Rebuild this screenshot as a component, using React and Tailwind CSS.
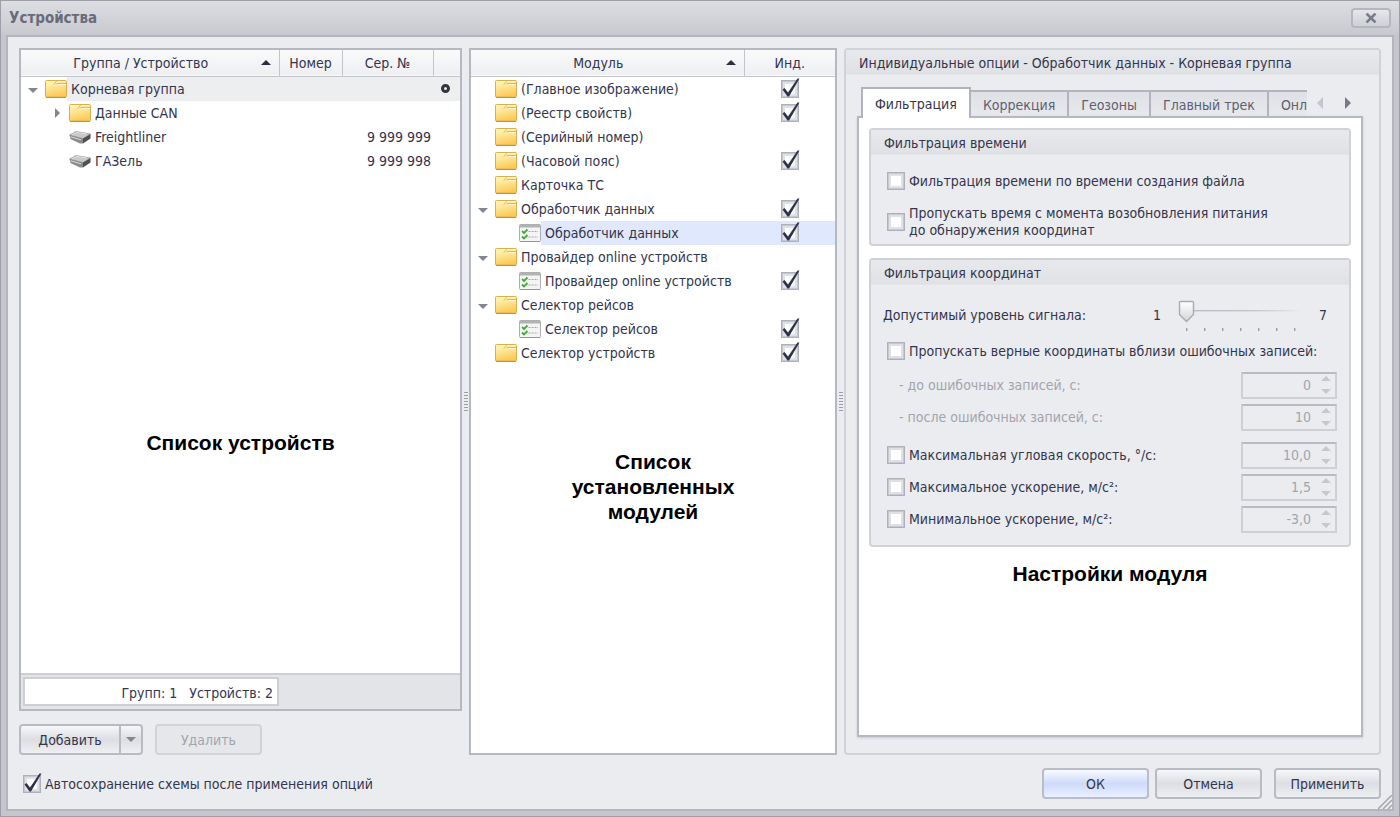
import React, { useId, useState } from 'react';

const DEVICES = [
  { name: 'Корневая группа', icon: 'folder', level: 0, arrow: 'down', focused: true, marker: true },
  { name: 'Данные CAN', icon: 'folder', level: 1, arrow: 'right' },
  { name: 'Freightliner', icon: 'device', level: 1, serial: '9 999 999' },
  { name: 'ГАЗель', icon: 'device', level: 1, serial: '9 999 998' },
];

const MODULES = [
  { name: '(Главное изображение)', icon: 'folder', level: 0, checked: true },
  { name: '(Реестр свойств)', icon: 'folder', level: 0, checked: true },
  { name: '(Серийный номер)', icon: 'folder', level: 0 },
  { name: '(Часовой пояс)', icon: 'folder', level: 0, checked: true },
  { name: 'Карточка ТС', icon: 'folder', level: 0 },
  { name: 'Обработчик данных', icon: 'folder', level: 0, arrow: 'down', checked: true },
  { name: 'Обработчик данных', icon: 'options', level: 1, checked: true, selected: true },
  { name: 'Провайдер online устройств', icon: 'folder', level: 0, arrow: 'down' },
  { name: 'Провайдер online устройств', icon: 'options', level: 1, checked: true },
  { name: 'Селектор рейсов', icon: 'folder', level: 0, arrow: 'down' },
  { name: 'Селектор рейсов', icon: 'options', level: 1, checked: true },
  { name: 'Селектор устройств', icon: 'folder', level: 0, checked: true },
];

const TABS = ['Фильтрация', 'Коррекция', 'Геозоны', 'Главный трек', 'Онл'];

function FolderIcon() {
  return (
    <svg width="22" height="20" viewBox="0 0 22 20" className="shrink-0">
      <defs>
        <linearGradient id="folderFill" x1="0" y1="0" x2="0.3" y2="1">
          <stop offset="0" stopColor="#fff8bb" />
          <stop offset="0.5" stopColor="#ffe48f" />
          <stop offset="1" stopColor="#fdc95a" />
        </linearGradient>
      </defs>
      <rect x="0.5" y="1.5" width="21" height="16.5" rx="1" fill="url(#folderFill)" stroke="#dcae4c" />
      <path d="M1.5 2.5h9.5l2.5 3h7.5" fill="none" stroke="#fffadb" />
      <path d="M11.5 2l-2.5 3.5M11.5 4.5h9.5" fill="none" stroke="#e3b655" />
      <path d="M12 2.5h8.5" stroke="#fff3c0" />
      <path d="M1 18.5h20" stroke="#c2953c" />
    </svg>
  );
}

function DeviceIcon() {
  return (
    <svg width="22" height="20" viewBox="0 0 22 20" className="shrink-0">
      <path d="M0.5 8L7 4.5l14.5 2.5L14 11.5z" fill="#c9c9c9" stroke="#a0a0a0" strokeWidth="0.8" />
      <path d="M3 7.8l5-2.2 9.5 1.4" fill="none" stroke="#e0e0e0" />
      <path d="M0.5 8L14 11.5V16.5h-3L1.5 12z" fill="#8a8a8a" />
      <path d="M14 11.5L21.5 7v4.5L14 16.5z" fill="#505050" />
      <path d="M1.5 9.8l10.5 3" stroke="#dcdcdc" />
    </svg>
  );
}

function OptionsIcon() {
  return (
    <svg width="22" height="20" viewBox="0 0 22 20" className="shrink-0">
      <rect x="0.5" y="1.5" width="21" height="17" rx="1" fill="#f4f4f4" stroke="#acacac" />
      <path d="M1 1.5h20v3H1z" fill="#b2b2b2" />
      <path d="M1 18.5h20" stroke="#969696" />
      <path d="M3 8l2 2 3.5-3.5M3 13.5l2 2 3.5-3.5" fill="none" stroke="#3fae35" strokeWidth="1.8" />
      <path d="M9.5 8.5h9.5M9.5 14h9.5" stroke="#a8a8a8" strokeDasharray="2 1" />
    </svg>
  );
}

function RowIcon({ name }) {
  if (name === 'folder') return <FolderIcon />;
  if (name === 'device') return <DeviceIcon />;
  return <OptionsIcon />;
}

function Triangle({ dir, className }) {
  const shapes = {
    up: { w: 10, h: 5, d: 'M0 5L5 0l5 5z' },
    down: { w: 10, h: 5, d: 'M0 0h10L5 5z' },
    left: { w: 6, h: 12, d: 'M6 0v12L0 6z' },
    right: { w: 6, h: 12, d: 'M0 0v12l6-6z' },
  };
  const { w, h, d } = shapes[dir];
  return (
    <svg viewBox={`0 0 ${w} ${h}`} className={`fill-current ${className}`}>
      <path d={d} />
    </svg>
  );
}

function Tick({ id, label, defaultChecked = false }) {
  return (
    <span className="relative inline-block size-[18px] shrink-0 align-middle">
      <input
        id={id}
        type="checkbox"
        aria-label={label}
        defaultChecked={defaultChecked}
        className="peer block size-[18px] appearance-none border border-[#aeb0ba] bg-white shadow-[inset_0_0_0_1px_#c6c8cf,inset_0_0_0_3px_#dfe1e6]"
      />
      <svg
        viewBox="0 0 20 20"
        className="pointer-events-none absolute -top-0.5 left-0 hidden size-5 peer-checked:block"
      >
        <path d="M1.5 11.5l2-1.5 3.5 4.5L16.5 0.5h2L8 18.5H6.5z" fill="#2f314a" />
      </svg>
    </span>
  );
}

function CheckRow({ children, defaultChecked }) {
  const id = useId();
  return (
    <div className="flex items-center gap-1">
      <Tick id={id} defaultChecked={defaultChecked} />
      <label htmlFor={id}>{children}</label>
    </div>
  );
}

function TreeCell({ row, highlight }) {
  return (
    <td className="p-0">
      <div className={`flex h-6 items-center ${row.level ? 'pl-6' : ''}`}>
        <span className="flex w-6 shrink-0 justify-center text-[#84858f]">
          {row.arrow === 'down' && <Triangle dir="down" className="mt-1 h-[5px] w-2.5" />}
          {row.arrow === 'right' && <Triangle dir="right" className="h-2.5 w-[5px]" />}
        </span>
        <RowIcon name={row.icon} />
        <span className={`h-6 flex-1 truncate pl-1 ${highlight}`}>{row.name}</span>
      </div>
    </td>
  );
}

function GroupBox({ title, children, className = '' }) {
  return (
    <section className={`min-w-0 rounded-sm border-2 border-[#d0d2d7] bg-[#ebecef] ${className}`}>
      <h2 className="h-[25px] border-b border-[#e4e5e9] bg-linear-to-b from-[#e8e9ec] to-[#dfe1e5] px-[13px] leading-[26px]">
        {title}
      </h2>
      {children}
    </section>
  );
}

function SpinBox({ id, value, label, disabled = true }) {
  return (
    <div className="flex h-[27px] w-24 items-center border-2 border-[#cfd0d6] border-t-[#b9bbc3] bg-[#ebecef] pr-1">
      <input
        id={id}
        type="text"
        aria-label={label}
        defaultValue={value}
        disabled={disabled}
        className="w-full min-w-0 flex-1 bg-transparent pr-2.5 text-right text-[#a3a4ae]"
      />
      <span className="flex flex-col gap-2 text-[#c6c8ce]">
        <Triangle dir="up" className="h-[5px] w-2.5" />
        <Triangle dir="down" className="h-[5px] w-2.5" />
      </span>
    </div>
  );
}

function LimitRow({ label, value }) {
  return (
    <div className="flex h-8 items-center justify-between">
      <CheckRow>{label}</CheckRow>
      <SpinBox label={label} value={value} />
    </div>
  );
}

function DisabledRow({ label, value }) {
  const id = useId();
  return (
    <div className="flex h-8 items-center justify-between pl-3 text-[#a3a4ae]">
      <label htmlFor={id}>{label}</label>
      <SpinBox id={id} value={value} />
    </div>
  );
}

function SignalSlider() {
  const [level, setLevel] = useState(1);
  return (
    <div className="-ml-1 flex items-center">
      <label htmlFor="signal" className="flex-1">Допустимый уровень сигнала:</label>
      <span>1</span>
      <div className="relative mr-1.5 ml-4 h-9 w-[126px]">
        <svg viewBox="0 0 126 36" className="absolute inset-0">
          <defs>
            <linearGradient id="track" x1="0" x2="1">
              <stop offset="0" stopColor="#b9bbc2" />
              <stop offset="0.6" stopColor="#c3c5cb" />
              <stop offset="1" stopColor="#b9bbc2" stopOpacity="0" />
            </linearGradient>
            <linearGradient id="thumb" x1="0" y1="0" x2="0" y2="1">
              <stop offset="0" stopColor="#ffffff" />
              <stop offset="1" stopColor="#d4d5da" />
            </linearGradient>
          </defs>
          <rect x="2" y="13" width="122" height="1.4" fill="url(#track)" />
          {[0, 1, 2, 3, 4, 5, 6].map((i) => (
            <rect key={i} x={9 + i * 18} y="31" width="1.4" height="3" fill="#9a9ca5" />
          ))}
          <path
            d="M3.5 4.5h12q1 0 1 1v12l-7 7-7-7v-12q0-1 1-1z"
            transform={`translate(${(level - 1) * 18} 0)`}
            fill="url(#thumb)"
            stroke="#a9abb3"
            strokeWidth="1.4"
          />
        </svg>
        <input
          id="signal"
          type="range"
          min="1"
          max="7"
          value={level}
          onChange={(e) => setLevel(Number(e.target.value))}
          className="absolute inset-0 w-full appearance-none bg-transparent [&::-webkit-slider-thumb]:size-4 [&::-webkit-slider-thumb]:appearance-none"
        />
      </div>
      <span className="w-7 text-center">7</span>
    </div>
  );
}

function Grip() {
  return (
    <div className="flex flex-col items-center justify-center gap-0.5">
      {[...Array(7)].map((_, i) => (
        <span key={i} className="h-px w-1 bg-[#9d9fa9]" />
      ))}
    </div>
  );
}

function PushButton({ children, primary, disabled }) {
  let look = 'border-[#b9bbc3] bg-linear-to-b from-[#f6f7f9] via-[#dcdee3] to-[#eeeff2]';
  if (primary) look = 'border-[#b9bdca] bg-linear-to-b from-[#f8faff] via-[#cfdafb] to-[#eaf0ff]';
  if (disabled) look = 'border-[#d2d3d9] bg-[#e6e7eb] text-[#a3a4ae]';
  return (
    <button type="button" disabled={disabled} className={`h-[31px] w-[107px] rounded-sm border-2 ${look}`}>
      {children}
    </button>
  );
}

const TH = 'border-r border-[#c3c5cd] p-0 font-normal last:border-r-0';
const NOTE = 'text-center font-["Liberation_Sans",sans-serif] text-[21px]/[25px] font-bold text-black';

function DevicesPanel() {
  return (
    <div className="flex flex-col gap-[13px]">
      <div className="relative flex flex-1 flex-col border-2 border-[#b6b8c1] bg-white">
        <table className="w-full table-fixed border-collapse">
          <thead>
            <tr className="h-[26px] border-b border-[#c3c5cd] bg-linear-to-b from-[#fafafb] to-[#eeeff1]">
              <th className={TH}>
                <div className="flex items-center pr-2">
                  <span className="flex-1">Группа / Устройство</span>
                  <Triangle dir="up" className="h-[5px] w-2.5 text-[#2b2d45]" />
                </div>
              </th>
              <th className={`${TH} w-[63px]`}>Номер</th>
              <th className={`${TH} w-[91px]`}>Сер. №</th>
              <th className={`${TH} w-[27px]`} />
            </tr>
          </thead>
          <tbody>
            {DEVICES.map((row) => {
              const highlight = row.focused ? 'bg-[#edeef0]' : '';
              return (
                <tr key={row.name}>
                  <TreeCell row={row} highlight={highlight} />
                  <td className={highlight} />
                  <td className={`p-0 pr-0.5 text-right ${highlight}`}>{row.serial}</td>
                  <td className={`p-0 ${highlight}`}>
                    {row.marker && (
                      <span className="ml-2 block size-[9px] rounded-full border-[3px] border-[#33343c]" />
                    )}
                  </td>
                </tr>
              );
            })}
          </tbody>
        </table>
        <div className="mt-auto flex h-9 border-t-2 border-[#cdcfd5] bg-[#e3e4e8] p-0.5">
          <div className="h-[29px] w-64 border-2 border-[#cdcfd5] bg-white pr-1 text-right leading-7">
            Групп: 1 &nbsp; Устройств: 2
          </div>
        </div>
        <p className={`${NOTE} pointer-events-none absolute inset-x-0 top-[380px]`}>Список устройств</p>
      </div>

      <div className="flex gap-3">
        <div className="flex h-[31px] rounded-sm border-2 border-[#b9bbc3] bg-linear-to-b from-[#f6f7f9] via-[#dcdee3] to-[#eeeff2]">
          <button type="button" className="w-[98px]">Добавить</button>
          <button
            type="button"
            aria-label="Варианты добавления"
            className="flex w-[22px] items-center justify-center border-l-2 border-[#b9bbc3] text-[#84858f]"
          >
            <Triangle dir="down" className="h-[5px] w-2.5" />
          </button>
        </div>
        <PushButton disabled>Удалить</PushButton>
      </div>
    </div>
  );
}

function ModulesPanel() {
  return (
    <div className="relative border-2 border-[#b6b8c1] bg-white">
      <table className="w-full table-fixed border-collapse">
        <thead>
          <tr className="h-[26px] border-b border-[#c3c5cd] bg-linear-to-b from-[#fafafb] to-[#eeeff1]">
            <th className={TH}>
              <div className="flex items-center pr-2">
                <span className="flex-1">Модуль</span>
                <Triangle dir="up" className="h-[5px] w-2.5 text-[#2b2d45]" />
              </div>
            </th>
            <th className={`${TH} w-[91px]`}>Инд.</th>
          </tr>
        </thead>
        <tbody>
          {MODULES.map((row) => {
            const highlight = row.selected ? 'bg-[#dfe8fc]' : '';
            return (
              <tr key={row.name + row.level}>
                <TreeCell row={row} highlight={highlight} />
                <td className={`p-0 text-center leading-none ${highlight}`}>
                  {row.checked && <Tick label={row.name} defaultChecked />}
                </td>
              </tr>
            );
          })}
        </tbody>
      </table>
      <p className={`${NOTE} pointer-events-none absolute inset-x-24 top-[399px]`}>
        Список установленных модулей
      </p>
    </div>
  );
}

function TabStrip() {
  return (
    <div className="flex h-[31px] items-end pl-1">
      <div role="tablist" className="flex min-w-0 flex-1 items-end overflow-hidden">
        {TABS.map((tab, i) => (
          <button
            key={tab}
            type="button"
            role="tab"
            aria-selected={i === 0}
            className={
              i === 0
                ? 'relative h-[31px] shrink-0 border-2 border-b-0 border-[#b1b3bd] bg-white px-3'
                : 'h-7 shrink-0 border-t-2 border-r-2 border-[#b1b3bd] bg-linear-to-b from-[#dfe0e5] to-[#e9eaed] px-3 text-[#5d5f72] last:flex-1 last:border-r-0 last:pr-0 last:text-left'
            }
          >
            {tab}
          </button>
        ))}
      </div>
      <div className="flex w-14 shrink-0 items-center justify-between self-center pr-3 pl-2.5">
        <button type="button" aria-label="Назад" className="text-[#c5c6cd]">
          <Triangle dir="left" className="h-3 w-1.5" />
        </button>
        <button type="button" aria-label="Вперёд" className="text-[#787a88]">
          <Triangle dir="right" className="h-3 w-1.5" />
        </button>
      </div>
    </div>
  );
}

function OptionsPanel() {
  return (
    <GroupBox title="Индивидуальные опции - Обработчик данных - Корневая группа" className="flex flex-col">
      <div className="flex flex-1 flex-col pt-3 pr-4 pb-4 pl-[11px]">
        <TabStrip />
        <div className="-mt-0.5 flex-1 border-2 border-[#b6b8c1] bg-white p-2.5 shadow-sm">
          <GroupBox title="Фильтрация времени">
            <div className="flex flex-col gap-3 px-4 pt-3.5 pb-[5px]">
              <CheckRow>Фильтрация времени по времени создания файла</CheckRow>
              <CheckRow>
                <span className="block leading-[17px]">
                  Пропускать время с момента возобновления питания
                  <br />
                  до обнаружения координат
                </span>
              </CheckRow>
            </div>
          </GroupBox>

          <GroupBox title="Фильтрация координат" className="mt-3">
            <div className="flex flex-col gap-1.5 pt-3 pr-3 pb-2.5 pl-4">
              <SignalSlider />
              <CheckRow>Пропускать верные координаты вблизи ошибочных записей:</CheckRow>
              <div>
                <DisabledRow label="- до ошибочных записей, с:" value="0" />
                <DisabledRow label="- после ошибочных записей, с:" value="10" />
              </div>
              <div>
                <LimitRow label="Максимальная угловая скорость, °/с:" value="10,0" />
                <LimitRow label="Максимальное ускорение, м/с²:" value="1,5" />
                <LimitRow label="Минимальное ускорение, м/с²:" value="-3,0" />
              </div>
            </div>
          </GroupBox>
          <p className={`${NOTE} mt-3.5`}>Настройки модуля</p>
        </div>
      </div>
    </GroupBox>
  );
}

export default function App() {
  return (
    <div className="flex min-h-screen flex-col border border-[#9d9ea8] bg-[#c5c6cd] p-[5px] pt-0 font-['DejaVu_Sans_Condensed','DejaVu_Sans',sans-serif] text-sm/6 text-[#33354d]">
      <header className="-mx-[5px] flex h-[34px] items-center justify-between bg-linear-to-b from-[#dddee2] to-[#c8c9cf] px-2">
        <h1 className="text-[15px] font-bold text-[#696b7a]">Устройства</h1>
        <button
          type="button"
          aria-label="Закрыть"
          className="flex h-5 w-10 items-center justify-center rounded-sm border-2 border-[#b5b7bf] bg-linear-to-b from-[#e6e7ea] to-[#cfd0d6]"
        >
          <svg viewBox="0 0 12 10" className="h-2.5 w-3">
            <path d="M1.5 0.5l9 9M10.5 0.5l-9 9" stroke="#7b7d8b" strokeWidth="2.6" />
          </svg>
        </button>
      </header>

      <main className="relative flex flex-1 flex-col gap-[13px] border-2 border-[#b3b5be] bg-[#ebecef] px-[11px] pt-[11px] pb-2.5">
        <div className="grid flex-1 grid-cols-[443fr_7px_368fr_7px_537fr]">
          <DevicesPanel />
          <Grip />
          <ModulesPanel />
          <Grip />
          <OptionsPanel />
        </div>

        <footer className="flex items-center justify-between pl-1">
          <CheckRow defaultChecked>Автосохранение схемы после применения опций</CheckRow>
          <div className="flex">
            <PushButton primary>ОК</PushButton>
            <span className="w-1.5" />
            <PushButton>Отмена</PushButton>
            <span className="w-3" />
            <PushButton>Применить</PushButton>
          </div>
        </footer>

        <svg viewBox="0 0 14 14" className="absolute right-0 bottom-0 size-3.5">
          <path d="M0 14L14 0M5 14l9-9M10 14l4-4" stroke="#a2a4ad" strokeWidth="1.5" />
        </svg>
      </main>
    </div>
  );
}
